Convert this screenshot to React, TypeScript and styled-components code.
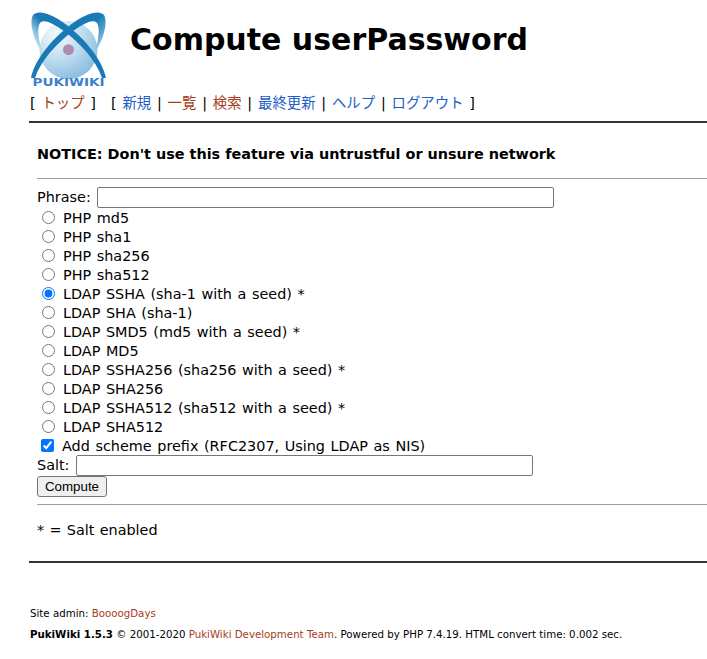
import React from "react";
import styled, { createGlobalStyle } from "styled-components";

const GlobalStyle = createGlobalStyle`
    html, body {
        margin: 0;
        padding: 0;
        background: #fff;
        color: #000;
        overflow: hidden;
    }
    body {
        font-family: "DejaVu Sans", Verdana, sans-serif;
    }
`;

const schemes = [
    { id: "php_md5", label: "PHP md5" },
    { id: "php_sha1", label: "PHP sha1" },
    { id: "php_sha256", label: "PHP sha256" },
    { id: "php_sha512", label: "PHP sha512" },
    { id: "ldap_ssha", label: "LDAP SSHA (sha-1 with a seed) *", checked: true },
    { id: "ldap_sha", label: "LDAP SHA (sha-1)" },
    { id: "ldap_smd5", label: "LDAP SMD5 (md5 with a seed) *" },
    { id: "ldap_md5", label: "LDAP MD5" },
    { id: "ldap_ssha256", label: "LDAP SSHA256 (sha256 with a seed) *" },
    { id: "ldap_sha256", label: "LDAP SHA256" },
    { id: "ldap_ssha512", label: "LDAP SSHA512 (sha512 with a seed) *" },
    { id: "ldap_sha512", label: "LDAP SHA512" },
];

const Logo = () => (
    <svg width="78" height="78" viewBox="0 0 78 78">
        <defs>
            <radialGradient id="ball" cx="0.3" cy="0.22" r="0.9">
                <stop offset="0" stopColor="#f6fafd" />
                <stop offset="0.45" stopColor="#c4e0f2" />
                <stop offset="1" stopColor="#7fb8dc" />
            </radialGradient>
            <linearGradient id="ringLeft" gradientUnits="userSpaceOnUse" x1="3" y1="40" x2="22" y2="22">
                <stop offset="0" stopColor="#dcecf6" />
                <stop offset="0.55" stopColor="#8cc2e2" />
                <stop offset="1" stopColor="#1a7ab5" />
            </linearGradient>
            <linearGradient id="ringRight" gradientUnits="userSpaceOnUse" x1="74" y1="40" x2="55" y2="22">
                <stop offset="0" stopColor="#d0e6f4" />
                <stop offset="0.5" stopColor="#5fa8d4" />
                <stop offset="1" stopColor="#1a7ab5" />
            </linearGradient>
        </defs>
        <circle cx="38.5" cy="40" r="29" fill="url(#ball)" />
        <path
            d="M76 68 C72 48 52 26 34 13 C22 4 8 -1 3 5 C-1 12 3 30 13 44 C8 30 7 18 10 13 C14 8 24 14 34 21 C50 33 66 50 72 68 Z"
            fill="url(#ringLeft)"
        />
        <path
            d="M1 68 C5 48 25 26 43 13 C55 4 69 -1 74 5 C78 12 74 30 64 44 C69 30 70 18 67 13 C63 8 53 14 43 21 C27 33 11 50 5 68 Z"
            fill="url(#ringRight)"
        />
        <circle cx="38.5" cy="39.7" r="5.5" fill="#b08db0" />
        <text
            x="38.5"
            y="75.5"
            textAnchor="middle"
            fontFamily="'DejaVu Sans', sans-serif"
            fontWeight="700"
            fontSize="10"
            textLength="72"
            lengthAdjust="spacingAndGlyphs"
            fill="#3a7fd0"
        >
            PUKIWIKI
        </text>
    </svg>
);

export default function App() {
    return (
        <>
            <GlobalStyle />
            <Page>
                <Header>
                    <LogoLink>
                        <Logo />
                    </LogoLink>
                    <Title>Compute userPassword</Title>
                </Header>
                <Navigator>
                    [ <Link $visited>トップ</Link> ]
                    <NavGroup>
                        [ <Link>新規</Link> | <Link $visited>一覧</Link> |{" "}
                        <Link $visited>検索</Link> | <Link>最終更新</Link> |{" "}
                        <Link>ヘルプ</Link> | <Link>ログアウト</Link> ]
                    </NavGroup>
                </Navigator>
                <HeavyRule />
                <Body>
                    <Notice>NOTICE: Don't use this feature via untrustful or unsure network</Notice>
                    <LightRule />
                    <Form>
                        <FieldRow>
                            <label htmlFor="phrase">Phrase:</label>
                            <TextInput id="phrase" type="text" />
                        </FieldRow>
                        {schemes.map((s) => (
                            <RadioRow key={s.id}>
                                <Radio
                                    type="radio"
                                    name="scheme"
                                    id={s.id}
                                    defaultChecked={s.checked}
                                />
                                <label htmlFor={s.id}>{s.label}</label>
                            </RadioRow>
                        ))}
                        <CheckRow>
                            <Check type="checkbox" id="prefix" defaultChecked />
                            <label htmlFor="prefix">Add scheme prefix (RFC2307, Using LDAP as NIS)</label>
                        </CheckRow>
                        <SaltRow>
                            <label htmlFor="salt">Salt:</label>
                            <TextInput id="salt" type="text" />
                        </SaltRow>
                        <SubmitButton type="button">Compute</SubmitButton>
                    </Form>
                    <LightRule />
                    <Hint>* = Salt enabled</Hint>
                </Body>
                <HeavyRule />
                <Footer>
                    <AdminLine>
                        Site admin: <FooterLink>BoooogDays</FooterLink>
                    </AdminLine>
                    <CopyLine>
                        <strong>PukiWiki 1.5.3</strong> © 2001-2020{" "}
                        <FooterLink>PukiWiki Development Team</FooterLink>. Powered by PHP 7.4.19. HTML convert
                        time: 0.002 sec.
                    </CopyLine>
                </Footer>
            </Page>
        </>
    );
}

const Page = styled.div`
    width: 678px;
    margin-left: 29px;
    height: 659px;
    font-size: 14.4px;
`;

const Header = styled.div`
    display: flex;
    align-items: flex-start;
    padding: 10px 0 0 1px;
    height: 85px;
    box-sizing: border-box;
`;

const LogoLink = styled.a`
    display: block;
    width: 78px;
    height: 78px;
`;

const Title = styled.h1`
    margin: 12px 0 0 22px;
    font-size: 30px;
    line-height: 36px;
    font-weight: 700;
    white-space: nowrap;
`;

const Navigator = styled.div`
    display: flex;
    padding-left: 1px;
    height: 36px;
    box-sizing: border-box;
    padding-top: 8px;
    font-size: 14.4px;
    line-height: 20px;
    word-spacing: 1.2px;
    white-space: pre-wrap;
    font-family: "DejaVu Sans", "Noto Sans CJK JP", sans-serif;
`;

const NavGroup = styled.span`
    margin-left: 15px;
`;

const Link = styled.a<{ $visited?: boolean }>`
    color: ${(p) => (p.$visited ? "#a63d21" : "#215dc6")};
`;

const HeavyRule = styled.hr`
    margin: 0;
    border: 0;
    height: 2px;
    background: #333;
`;

const Body = styled.div`
    padding: 0 0 0 8px;
`;

const Notice = styled.p`
    margin: 0;
    padding-top: 23px;
    height: 55px;
    box-sizing: border-box;
    font-weight: 700;
    font-size: 14.4px;
    line-height: 17px;
`;

const LightRule = styled.hr`
    margin: 0;
    border: 0;
    height: 1px;
    background: #a0a0a0;
`;

const Form = styled.form`
    padding-top: 8px;
    height: 325px;
    box-sizing: border-box;
    font-size: 14.4px;
    line-height: 19px;
`;

const FieldRow = styled.div`
    display: flex;
    align-items: center;
    gap: 6px;
    height: 21px;
`;

const SaltRow = styled(FieldRow)`
    gap: 7px;
`;

const TextInput = styled.input`
    width: 457px;
    height: 21px;
    box-sizing: border-box;
    padding: 1px 2px;
    border: 1px solid #767676;
    border-radius: 2px;
    background: #fff;
`;

const RadioRow = styled.div`
    display: flex;
    align-items: center;
    height: 19px;

    label {
        padding-top: 2px;
        word-spacing: 1px;
    }
`;

const Radio = styled.input`
    width: 13px;
    height: 13px;
    margin: 0 8px 0 5px;
    accent-color: #0075ff;
`;

const CheckRow = styled(RadioRow)``;

const Check = styled.input`
    width: 13px;
    height: 13px;
    margin: 0 8px 0 4px;
    accent-color: #0075ff;
`;

const SubmitButton = styled.button`
    display: block;
    width: 70px;
    height: 21px;
    margin-top: 0;
    padding: 0;
    font-family: "Liberation Sans", Arial, sans-serif;
    font-size: 13.33px;
    color: #000;
    background: #efefef;
    border: 1px solid #767676;
    border-radius: 3px;
`;

const Hint = styled.p`
    margin: 0;
    height: 56px;
    box-sizing: border-box;
    padding-top: 16px;
    font-size: 14.4px;
    line-height: 18px;
    word-spacing: 0.7px;
`;

const Footer = styled.div`
    padding: 44px 0 0 1px;
    font-size: 10.24px;
    line-height: 12px;
`;

const AdminLine = styled.div`
    height: 21px;
`;

const CopyLine = styled.div`
    white-space: nowrap;
`;

const FooterLink = styled.a`
    color: #a63d21;
`;
